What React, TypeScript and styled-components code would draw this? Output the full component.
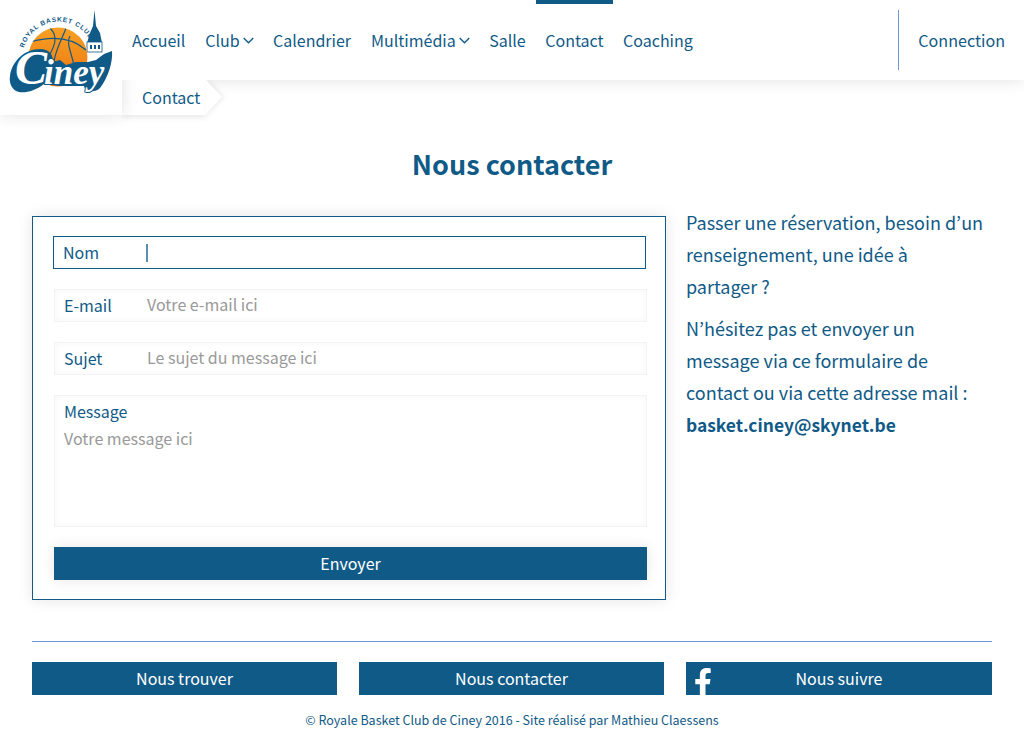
import React from 'react';
import styled, { createGlobalStyle } from 'styled-components';
import { FaFacebookF } from 'react-icons/fa';

const BLUE = '#105a87';

const GlobalStyle = createGlobalStyle`
  html, body {
    margin: 0;
    padding: 0;
    background: #fff;
  }
  body {
    font-family: 'Noto Sans CJK JP', 'Noto Sans', sans-serif;
    color: ${BLUE};
    font-size: 16px;
  }
  * {
    box-sizing: border-box;
  }
`;

const Page = styled.div`
  width: 1024px;
  height: 749px;
  overflow: hidden;
  position: relative;
`;

const Header = styled.header`
  display: flex;
  align-items: stretch;
  height: 80px;
  background: #fff;
  box-shadow: 0 0 15px rgba(0, 0, 0, 0.12);
  position: relative;
`;

const LogoBlock = styled.a`
  position: absolute;
  left: 0;
  top: 0;
  width: 122px;
  height: 115px;
  background: #fff;
  box-shadow: 0 0 15px rgba(0, 0, 0, 0.12);
  z-index: 3;
`;

const Nav = styled.nav`
  display: flex;
  margin-left: 122px;
  flex: 1;
  background: #fff;
  position: relative;
  z-index: 4;
`;

const NavItem = styled.a<{ $active?: boolean; $hasMenu?: boolean }>`
  display: flex;
  align-items: center;
  gap: 3px;
  height: 80px;
  padding: 0 ${(p) => (p.$hasMenu || p.$active ? '9.5px' : '10px')} 0 ${(p) => (p.$active ? '9.5px' : '10px')};
  line-height: 1;
  font-size: 16px;
  white-space: nowrap;
  border-top: 4px solid ${(p) => (p.$active ? BLUE : 'transparent')};
  border-bottom: 4px solid transparent;
`;

const Chevron = styled.svg`
  width: 11px;
  height: 7px;
  fill: none;
  stroke: ${BLUE};
  stroke-width: 1.3;
`;

const Connection = styled.a`
  display: flex;
  align-items: center;
  align-self: center;
  height: 60px;
  margin-left: auto;
  padding: 0 19px;
  border-left: 1px solid #6a96d8;
  font-size: 16.1px;
  line-height: 1;
`;

const Breadcrumb = styled.div`
  position: absolute;
  left: 122px;
  top: 80px;
  width: 84px;
  height: 35px;
  padding: 0 0 2px 20px;
  display: flex;
  align-items: center;
  font-size: 16px;
  line-height: 1;
  background: #fff;
  box-shadow: 0 2px 6px rgba(0, 0, 0, 0.1);
  z-index: 2;

  &::after {
    content: '';
    position: absolute;
    left: 84px;
    top: 0;
    border-left: 16px solid #fff;
    border-top: 17.5px solid transparent;
    border-bottom: 17.5px solid transparent;
    filter: drop-shadow(2px 0 2px rgba(0, 0, 0, 0.08));
  }
`;

const Main = styled.main`
  padding: 0 32px;
`;

const Title = styled.h1`
  margin: 0;
  padding-top: 66px;
  height: 127px;
  text-align: center;
  font-size: 27px;
  line-height: 36px;
  font-weight: 700;
`;

const Columns = styled.div`
  display: flex;
  align-items: flex-start;
  gap: 20px;
`;

const Form = styled.form`
  width: 634px;
  height: 384px;
  margin-top: 9px;
  padding: 19px 18px 19px 21px;
  border: 1px solid ${BLUE};
  box-shadow: 0 0 15px rgba(0, 0, 0, 0.1);
  display: flex;
  flex-direction: column;
  align-items: flex-start;
  gap: 20px;
`;

const Field = styled.label<{ $focused?: boolean }>`
  display: flex;
  align-items: center;
  width: 593px;
  height: 33px;
  padding: 0 0 2px 9px;
  font-size: 16px;
  line-height: 1;
  border: 1px solid ${(p) => (p.$focused ? BLUE : '#f3f3f3')};
  box-shadow: inset 0 0 6px rgba(0, 0, 0, 0.04);
  margin-left: ${(p) => (p.$focused ? '-1px' : '0')};
`;

const FieldName = styled.span`
  width: 83px;
  flex: none;
`;

const Placeholder = styled.span`
  color: #999;
  margin-bottom: 2px;
`;

const Caret = styled.span`
  width: 1.5px;
  height: 18px;
  margin-top: 2px;
  background: #5b8db0;
`;

const MessageBox = styled.div`
  width: 593px;
  height: 132px;
  padding: 2px 9px;
  border: 1px solid #f3f3f3;
  box-shadow: inset 0 0 6px rgba(0, 0, 0, 0.04);
  display: flex;
  flex-direction: column;
  font-size: 16px;
  line-height: 27px;
`;

const SubmitButton = styled.button`
  width: 593px;
  height: 33px;
  padding: 0 0 2px;
  border: 0;
  background: ${BLUE};
  color: #fff;
  font: inherit;
  font-size: 16px;
  line-height: 1;
  box-shadow: 0 0 14px rgba(0, 0, 0, 0.1);
`;

const Aside = styled.aside`
  width: 306px;
  font-size: 18px;
  line-height: 32px;
  margin-top: -1px;

  p {
    margin: 0 0 10px;
  }

  strong {
    font-weight: 700;
    font-size: 17.4px;
  }
`;

const Footer = styled.footer`
  position: absolute;
  left: 32px;
  right: 32px;
  top: 641px;
  border-top: 1px solid #6a96d8;
  padding-top: 20px;
`;

const FooterLinks = styled.div`
  display: grid;
  grid-template-columns: 305px 305px 306px;
  column-gap: 22px;
`;

const FooterLink = styled.a`
  position: relative;
  height: 33px;
  padding-bottom: 2px;
  overflow: hidden;
  display: flex;
  align-items: center;
  justify-content: center;
  background: ${BLUE};
  color: #fff;
  font-size: 16px;
  line-height: 1;
`;

const FacebookIcon = styled(FaFacebookF)`
  position: absolute;
  left: 8px;
  top: 5px;
  width: 18px;
  height: 31px;
`;

const Copyright = styled.div`
  margin-top: 16px;
  text-align: center;
  font-size: 12.5px;
  line-height: 18px;
`;

const ChevronDown = () => (
  <Chevron viewBox="0 0 11 7">
    <path d="M0.7 1 L5.5 5.8 L10.3 1" />
  </Chevron>
);

const Logo = () => (
  <svg width="122" height="115" viewBox="0 0 122 115" style={{ display: 'block' }}>
    <defs>
      <linearGradient id="ball" x1="0" y1="0" x2="0" y2="1">
        <stop offset="0" stopColor="#f7a024" />
        <stop offset="1" stopColor="#ec7510" />
      </linearGradient>
      <clipPath id="ballClip">
        <circle cx="58" cy="57" r="29.5" />
      </clipPath>
      <path id="arcText" d="M24 48 A 36 36 0 0 1 92 44" fill="none" />
    </defs>
    <text fontFamily="'Liberation Sans', sans-serif" fontSize="6.6" fontWeight="700" fill={BLUE} letterSpacing="0.75">
      <textPath href="#arcText">ROYAL BASKET CLUB</textPath>
    </text>
    <path d="M94.5 10 L96 26 L100 33 L102 43 L87 43 L90 33 L93 26 Z" fill={BLUE} />
    <rect x="87" y="42" width="15" height="10" fill="#fff" stroke={BLUE} strokeWidth="0.8" />
    <path d="M90 45 h2 v4 h-2 z M94 45 h2 v4 h-2 z M98 45 h2 v4 h-2 z" fill={BLUE} />
    <circle cx="58" cy="57" r="29.5" fill="url(#ball)" />
    <g clipPath="url(#ballClip)" fill="none" stroke={BLUE} strokeWidth="1.2">
      <path d="M30 42 C44 38 68 34 86 50" />
      <path d="M50 28 C58 36 58 44 40 70" />
      <path d="M66 28 C62 40 52 54 52 80" />
      <path d="M70 36 C64 46 78 60 74 84" />
    </g>
    <path
      d="M10 76 C12 60 26 49 40 49 C50 49 54 56 52 62 L60 60 L66 65 L76 62 L88 62 L96 60 L104 54 L112 51 C113 62 108 78 100 88 C95 93 85 92 84 86 L60 86 L44 84 C34 92 22 94 16 91 C11 88 9 82 10 76 Z"
      fill={BLUE}
    />
    <text
      fontFamily="'Liberation Serif', serif"
      fontStyle="italic"
      fontWeight="700"
      fill="#fff"
      stroke={BLUE}
      strokeWidth="2"
      strokeLinejoin="round"
      paintOrder="stroke"
      x="15"
      y="84"
    >
      <tspan fontSize="48">C</tspan>
      <tspan fontSize="35" dx="-3">iney</tspan>
    </text>
  </svg>
);

const App = () => {
  return (
    <Page>
      <GlobalStyle />
      <Header>
        <LogoBlock>
          <Logo />
        </LogoBlock>
        <Nav>
          <NavItem>Accueil</NavItem>
          <NavItem $hasMenu>
            Club <ChevronDown />
          </NavItem>
          <NavItem>Calendrier</NavItem>
          <NavItem $hasMenu>
            Multimédia <ChevronDown />
          </NavItem>
          <NavItem>Salle</NavItem>
          <NavItem $active>Contact</NavItem>
          <NavItem>Coaching</NavItem>
          <Connection>Connection</Connection>
        </Nav>
      </Header>
      <Breadcrumb>Contact</Breadcrumb>
      <Main>
        <Title>Nous contacter</Title>
        <Columns>
          <Form>
            <Field $focused>
              <FieldName>Nom</FieldName>
              <Caret />
            </Field>
            <Field>
              <FieldName>E-mail</FieldName>
              <Placeholder>Votre e-mail ici</Placeholder>
            </Field>
            <Field>
              <FieldName>Sujet</FieldName>
              <Placeholder>Le sujet du message ici</Placeholder>
            </Field>
            <MessageBox>
              <span>Message</span>
              <Placeholder>Votre message ici</Placeholder>
            </MessageBox>
            <SubmitButton type="button">Envoyer</SubmitButton>
          </Form>
          <Aside>
            <p>Passer une réservation, besoin d’un renseignement, une idée à partager&nbsp;?</p>
            <p>
              N’hésitez pas et envoyer un message via ce formulaire de contact ou via cette adresse mail :{' '}
              <strong>basket.ciney@skynet.be</strong>
            </p>
          </Aside>
        </Columns>
      </Main>
      <Footer>
        <FooterLinks>
          <FooterLink>Nous trouver</FooterLink>
          <FooterLink>Nous contacter</FooterLink>
          <FooterLink>
            <FacebookIcon />
            Nous suivre
          </FooterLink>
        </FooterLinks>
        <Copyright>© Royale Basket Club de Ciney 2016 - Site réalisé par Mathieu Claessens</Copyright>
      </Footer>
    </Page>
  );
};

export default App;
